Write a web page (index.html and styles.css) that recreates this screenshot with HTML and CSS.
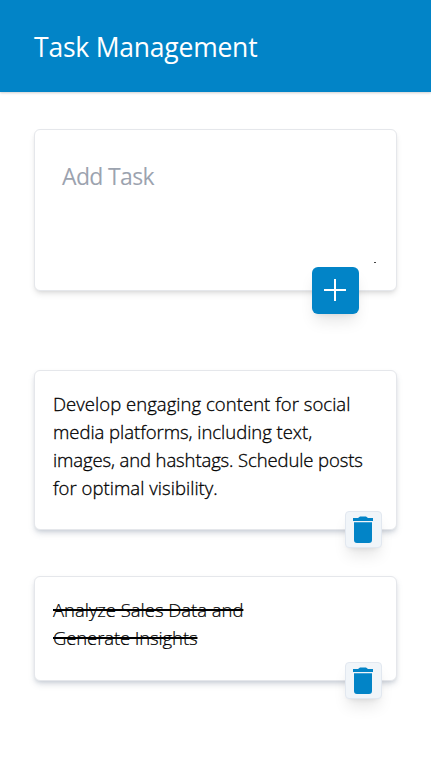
FILE: index.html
```html
<!DOCTYPE html>
<html lang="en">
<head>
<meta charset="utf-8">
<meta name="viewport" content="width=device-width, initial-scale=1">
<title>Task Management</title>
<link rel="stylesheet" href="styles.css">
</head>
<body>
<header class="header"><h1>Task Management</h1></header>
<main>
  <form class="card composer">
    <div class="placeholder">Add Task</div>
    <i class="grip"></i>
    <button class="add" type="button" aria-label="Add task">
      <svg width="23" height="23" viewBox="0 0 23 23"><path d="M11.5 .5v22M.5 11.5h22" stroke="#fff" stroke-width="2"/></svg>
    </button>
  </form>
  <article class="card task">
    <p><span class="wide">Develop engaging content for social</span><br>media platforms, including text,<br><span class="tight">images, and hashtags. Schedule posts</span><br><span class="wide">for optimal visibility.</span></p>
    <button class="delete" type="button" aria-label="Delete task">
      <svg width="22" height="28" viewBox="0 0 22 28"><path d="M1 2h5l2-1.5h6L16 2h5v3H1zM2 6.2h18V24q0 3-3 3H5q-3 0-3-3z" fill="#0284c7"/></svg>
    </button>
  </article>
  <article class="card task done">
    <p>Analyze Sales Data and<br><span class="tight">Generate Insights</span></p>
    <button class="delete" type="button" aria-label="Delete task">
      <svg width="22" height="28" viewBox="0 0 22 28"><path d="M1 2h5l2-1.5h6L16 2h5v3H1zM2 6.2h18V24q0 3-3 3H5q-3 0-3-3z" fill="#0284c7"/></svg>
    </button>
  </article>
</main>
</body>
</html>
```
FILE: styles.css
```css
* { box-sizing: border-box; }
body { margin: 0; background: #fff; color: #000; font-family: "Segoe UI", "Open Sans", "Noto Sans", sans-serif; }
.header { height: 92px; padding: 28px 34px; background: #0284c7; box-shadow: 0 1px 3px #0000001a, 0 1px 2px #0000001a; }
h1 { margin: 0; color: #fff; font-size: 26.5px; line-height: 38px; font-weight: 400; letter-spacing: -.22px; white-space: nowrap; }
main { padding: 37px 34px 0; }
.card { position: relative; border: 1px solid #e5e7eb; border-radius: 6px; background: #fff; }
.composer { height: 162px; margin-bottom: 79px; padding: 28px 27px; box-shadow: 0 4px 6px -1px #0000001a, 0 2px 4px -2px #0000001a; }
.placeholder { color: #9ca3af; font-size: 23px; line-height: 36px; letter-spacing: -.65px; white-space: nowrap; }
.grip { position: absolute; right: 20px; bottom: 27px; width: 2px; height: 1px; background: #444; }
.add, .delete { position: absolute; display: flex; align-items: center; justify-content: center; padding: 0; border: 0; }
.add { right: 37px; bottom: -23.5px; width: 47px; height: 47px; border-radius: 6px; background: #0284c7; box-shadow: 0 10px 15px -3px #0000001a, 0 4px 6px -4px #0000001a; }
.add svg { transform: translate(-.5px, -.5px); }
.task { height: 160px; margin-bottom: 46px; padding: 19px 18px; box-shadow: 0 4px 6px -1px #64748b40, 0 2px 4px -2px #64748b40; }
.done { height: 105px; }
.task p { margin: 0; font-size: 18.5px; line-height: 28px; font-weight: 300; letter-spacing: -.03px; white-space: nowrap; -webkit-text-stroke: .3px #000; }
.task .wide { letter-spacing: .04px; }
.task .tight { letter-spacing: -.12px; }
.done p { text-decoration: line-through; text-decoration-thickness: 2px; -webkit-text-stroke-width: .2px; }
.delete { right: 14px; bottom: -19px; width: 37px; height: 37px; border: 1px solid #e2e8f0; border-radius: 4px; background: #f1f5f9; box-shadow: 0 10px 15px -3px #0000001a, 0 4px 6px -4px #0000001a; }
.delete svg { transform: translateX(-1px); }
```
